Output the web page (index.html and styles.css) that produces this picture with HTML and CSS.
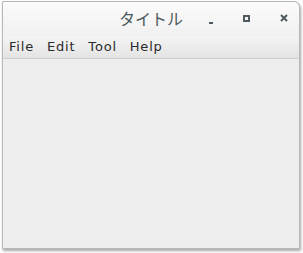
FILE: index.html
```html
<!DOCTYPE html>
<html lang="ja">

<head>
    <meta charset="utf-8">
    <title>タイトル</title>
    <link rel="stylesheet" href="styles.css">
</head>

<body>
    <div class="window">
        <!-- titelbar med titel og knapper -->
        <div class="titlebar">
            <span class="title">タイトル</span>
            <div class="controls">
                <span class="btn btn-min"></span>
                <span class="btn btn-max"></span>
                <span class="btn btn-close">
                    <svg width="8" height="8" viewBox="0 0 8 8">
                        <path d="M1 1 L7 7 M7 1 L1 7" stroke="#4e5a60" stroke-width="2"/>
                    </svg>
                </span>
            </div>
        </div>
        <!-- menulinje -->
        <nav class="menubar">
            <span class="menu">File</span>
            <span class="menu">Edit</span>
            <span class="menu">Tool</span>
            <span class="menu">Help</span>
        </nav>
        <div class="content"></div>
    </div>
</body>

</html>
```
FILE: styles.css
```css
body {
    margin: 0;
    padding: 0;
    background: #ffffff;
    width: 303px;
    height: 253px;
    overflow: hidden;
}

.window {
    margin: 1px 3px 0 2px;
    height: 248px;
    display: flex;
    flex-direction: column;
    border: 1px solid #b8b8b8;
    border-radius: 1px 6px 0 0;
    background: #eeeeee;
    box-shadow: 1px 2px 3px rgba(0, 0, 0, 0.35);
    box-sizing: border-box;
}

.titlebar {
    height: 34px;
    display: flex;
    align-items: center;
    justify-content: center;
    position: relative;
    background: linear-gradient(#fbfbfb, #f1f1f1);
    border-radius: 0 6px 0 0;
}

.title {
    font-family: "Noto Sans CJK JP", sans-serif;
    font-size: 16px;
    color: #4e5a60;
    padding-bottom: 2px;
}

.controls {
    position: absolute;
    right: 0;
    top: 0;
    height: 34px;
    display: flex;
    align-items: center;
    padding-bottom: 2px;
    box-sizing: border-box;
}

.btn {
    width: 8px;
    height: 8px;
    display: flex;
    box-sizing: border-box;
}

.btn-min {
    margin-right: 30px;
    border-bottom: 2px solid #4e5a60;
    width: 4px;
    height: 7px;
    margin-top: 4px;
}

.btn-max {
    margin-right: 30px;
    border: 2px solid #4e5a60;
    width: 7px;
    height: 7px;
}

.btn-close {
    margin-right: 11px;
}

.menubar {
    height: 23px;
    display: flex;
    align-items: center;
    padding-left: 6px;
    padding-bottom: 2px;
    gap: 13px;
    background: linear-gradient(#f4f4f4, #e4e4e4);
    border-bottom: 1px solid #cfcfcf;
    font-family: "DejaVu Sans", sans-serif;
    font-size: 13px;
    letter-spacing: 0.8px;
    color: #2a2a2a;
    box-sizing: border-box;
}

.content {
    flex: 1;
    background: #eeeeee;
}
```
